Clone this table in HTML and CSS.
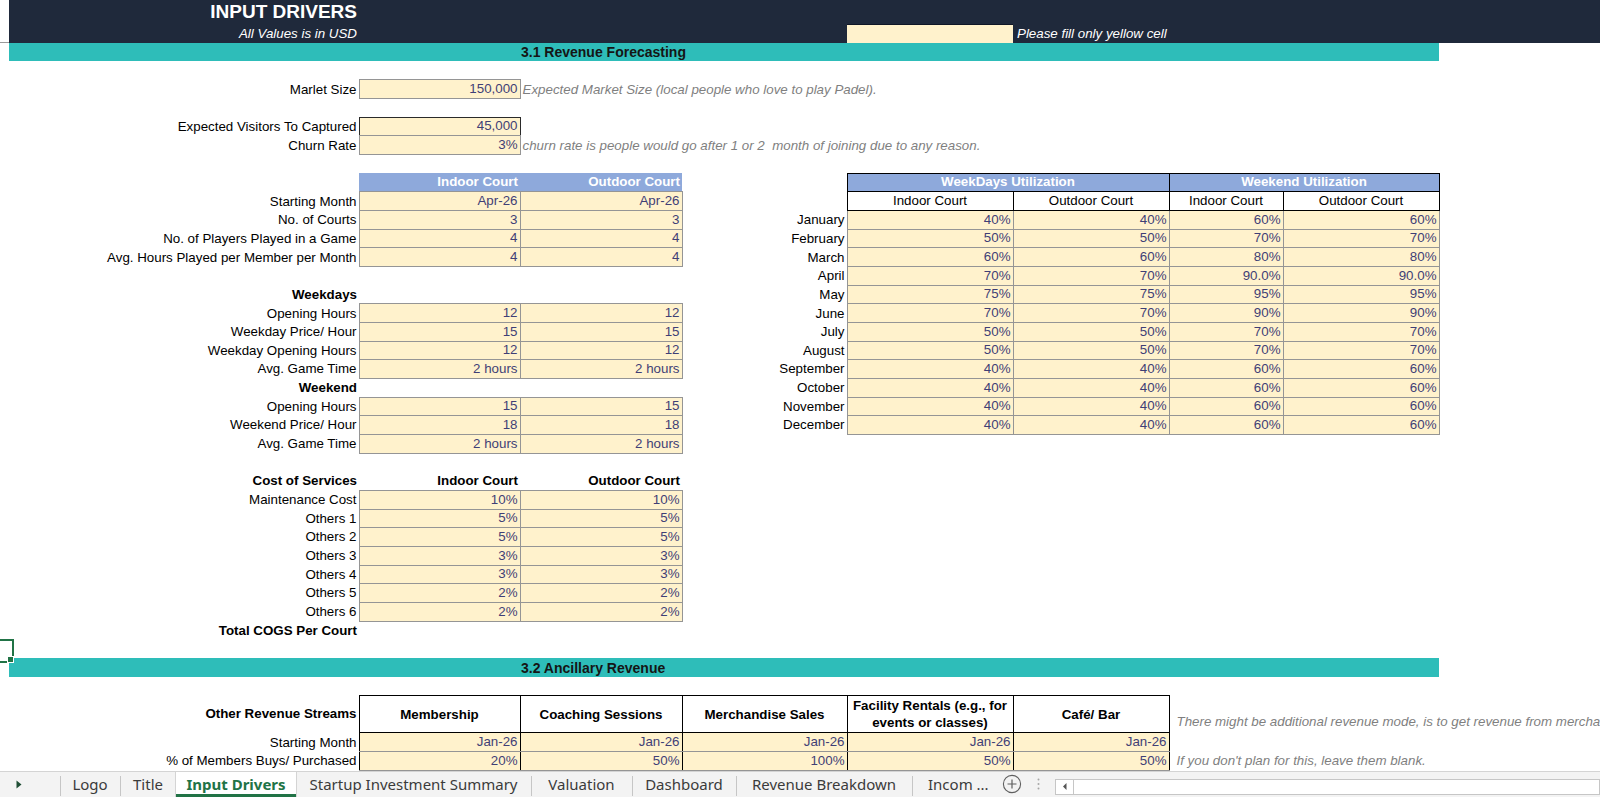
FILE: index.html
```html
<!DOCTYPE html>
<html lang="en">
<head>
<meta charset="utf-8">
<title>Input Drivers</title>
<link rel="stylesheet" href="styles.css">
</head>
<body>
<table class="sheet">
<colgroup>
<col class="ca"><col class="cb"><col class="cc"><col class="cd"><col class="ce"><col class="cf"><col class="cg"><col class="ch"><col class="ci"><col class="cj">
</colgroup>
<tbody>
<tr class="h0 navy"><td class="gut"></td><td class="title">INPUT DRIVERS</td><td colspan="8"></td></tr>
<tr class="navy"><td class="gut line"></td><td class="subt">All Values is in USD</td><td></td><td></td><td></td><td class="hy"></td><td class="hnote" colspan="4">Please fill only yellow cell</td></tr>
<tr><td></td><td class="tl"></td><td class="tl"></td><td class="tl sec" colspan="2">3.1 Revenue Forecasting</td><td class="tl"></td><td class="tl"></td><td class="tl"></td><td class="tl"></td><td></td></tr>
<tr><td colspan="10"></td></tr>
<tr><td></td><td class="lbl">Marlet Size</td><td class="in">150,000</td><td class="note" colspan="7">Expected Market Size (local people who love to play Padel).</td></tr>
<tr><td colspan="10"></td></tr>
<tr><td></td><td class="lbl">Expected Visitors To Captured</td><td class="in dk">45,000</td><td colspan="7"></td></tr>
<tr><td></td><td class="lbl">Churn Rate</td><td class="in">3%</td><td class="note" colspan="7">churn rate is people would go after 1 or 2&nbsp; month of joining due to any reason.</td></tr>
<tr><td colspan="10"></td></tr>
<tr><td></td><td></td><td class="blue">Indoor Court</td><td class="blue">Outdoor Court</td><td></td><td class="bhd" colspan="2">WeekDays Utilization</td><td class="bhd" colspan="2">Weekend Utilization</td><td></td></tr>
<tr><td></td><td class="lbl">Starting Month</td><td class="in">Apr-26</td><td class="in">Apr-26</td><td></td><td class="sub">Indoor Court</td><td class="sub">Outdoor Court</td><td class="sub">Indoor Court</td><td class="sub">Outdoor Court</td><td></td></tr>
<tr><td></td><td class="lbl">No. of Courts</td><td class="in">3</td><td class="in">3</td><td class="lbl">January</td><td class="in">40%</td><td class="in">40%</td><td class="in">60%</td><td class="in">60%</td><td></td></tr>
<tr><td></td><td class="lbl">No. of Players Played in a Game</td><td class="in">4</td><td class="in">4</td><td class="lbl">February</td><td class="in">50%</td><td class="in">50%</td><td class="in">70%</td><td class="in">70%</td><td></td></tr>
<tr><td></td><td class="lbl">Avg. Hours Played per Member per Month</td><td class="in">4</td><td class="in">4</td><td class="lbl">March</td><td class="in">60%</td><td class="in">60%</td><td class="in">80%</td><td class="in">80%</td><td></td></tr>
<tr><td></td><td></td><td></td><td></td><td class="lbl">April</td><td class="in">70%</td><td class="in">70%</td><td class="in">90.0%</td><td class="in">90.0%</td><td></td></tr>
<tr><td></td><td class="lbl b">Weekdays</td><td></td><td></td><td class="lbl">May</td><td class="in">75%</td><td class="in">75%</td><td class="in">95%</td><td class="in">95%</td><td></td></tr>
<tr><td></td><td class="lbl">Opening Hours</td><td class="in">12</td><td class="in">12</td><td class="lbl">June</td><td class="in">70%</td><td class="in">70%</td><td class="in">90%</td><td class="in">90%</td><td></td></tr>
<tr><td></td><td class="lbl">Weekday Price/ Hour</td><td class="in">15</td><td class="in">15</td><td class="lbl">July</td><td class="in">50%</td><td class="in">50%</td><td class="in">70%</td><td class="in">70%</td><td></td></tr>
<tr><td></td><td class="lbl">Weekday Opening Hours</td><td class="in">12</td><td class="in">12</td><td class="lbl">August</td><td class="in">50%</td><td class="in">50%</td><td class="in">70%</td><td class="in">70%</td><td></td></tr>
<tr><td></td><td class="lbl">Avg. Game Time</td><td class="in">2 hours</td><td class="in">2 hours</td><td class="lbl">September</td><td class="in">40%</td><td class="in">40%</td><td class="in">60%</td><td class="in">60%</td><td></td></tr>
<tr><td></td><td class="lbl b">Weekend</td><td></td><td></td><td class="lbl">October</td><td class="in">40%</td><td class="in">40%</td><td class="in">60%</td><td class="in">60%</td><td></td></tr>
<tr><td></td><td class="lbl">Opening Hours</td><td class="in">15</td><td class="in">15</td><td class="lbl">November</td><td class="in">40%</td><td class="in">40%</td><td class="in">60%</td><td class="in">60%</td><td></td></tr>
<tr><td></td><td class="lbl">Weekend Price/ Hour</td><td class="in">18</td><td class="in">18</td><td class="lbl">December</td><td class="in">40%</td><td class="in">40%</td><td class="in">60%</td><td class="in">60%</td><td></td></tr>
<tr><td></td><td class="lbl">Avg. Game Time</td><td class="in">2 hours</td><td class="in">2 hours</td><td colspan="6"></td></tr>
<tr><td colspan="10"></td></tr>
<tr><td></td><td class="lbl b">Cost of Services</td><td class="lbl b">Indoor Court</td><td class="lbl b">Outdoor Court</td><td colspan="6"></td></tr>
<tr><td></td><td class="lbl">Maintenance Cost</td><td class="in">10%</td><td class="in">10%</td><td colspan="6"></td></tr>
<tr><td></td><td class="lbl">Others 1</td><td class="in">5%</td><td class="in">5%</td><td colspan="6"></td></tr>
<tr><td></td><td class="lbl">Others 2</td><td class="in">5%</td><td class="in">5%</td><td colspan="6"></td></tr>
<tr><td></td><td class="lbl">Others 3</td><td class="in">3%</td><td class="in">3%</td><td colspan="6"></td></tr>
<tr><td></td><td class="lbl">Others 4</td><td class="in">3%</td><td class="in">3%</td><td colspan="6"></td></tr>
<tr><td></td><td class="lbl">Others 5</td><td class="in">2%</td><td class="in">2%</td><td colspan="6"></td></tr>
<tr><td></td><td class="lbl">Others 6</td><td class="in">2%</td><td class="in">2%</td><td colspan="6"></td></tr>
<tr><td></td><td class="lbl b">Total COGS Per Court</td><td colspan="8"></td></tr>
<tr><td class="sel"></td><td colspan="9"></td></tr>
<tr><td></td><td class="tl"></td><td class="tl"></td><td class="tl sec" colspan="2">3.2 Ancillary Revenue</td><td class="tl"></td><td class="tl"></td><td class="tl"></td><td class="tl"></td><td></td></tr>
<tr><td colspan="10"></td></tr>
<tr class="tall"><td></td><td class="lbl b mid">Other Revenue Streams</td><td class="oh">Membership</td><td class="oh">Coaching Sessions</td><td class="oh">Merchandise Sales</td><td class="oh wrap">Facility Rentals (e.g., for events or classes)</td><td class="oh">Café/ Bar</td><td class="note ind tallnote" colspan="3">There might be additional revenue mode, is to get revenue from merchandise, coaching sessions and events.</td></tr>
<tr><td></td><td class="lbl">Starting Month</td><td class="od">Jan-26</td><td class="od">Jan-26</td><td class="od">Jan-26</td><td class="od">Jan-26</td><td class="od">Jan-26</td><td colspan="3"></td></tr>
<tr><td></td><td class="lbl">% of Members Buys/ Purchased</td><td class="od">20%</td><td class="od">50%</td><td class="od">100%</td><td class="od">50%</td><td class="od">50%</td><td class="note ind" colspan="3">If you don't plan for this, leave them blank.</td></tr>
</tbody>
</table>

<div class="tabs">
  <div class="nav"><svg width="6" height="9" viewBox="0 0 6 9"><path d="M0.5 0.5 L5.5 4.5 L0.5 8.5 Z" fill="#1f4e35"/></svg></div>
  <div class="tab sep t-logo">Logo</div>
  <div class="tab sep t-title">Title</div>
  <div class="tab active t-input">Input Drivers</div>
  <div class="tab t-startup">Startup Investment Summary</div>
  <div class="tab sep t-val">Valuation</div>
  <div class="tab sep t-dash">Dashboard</div>
  <div class="tab sep t-rev">Revenue Breakdown</div>
  <div class="tab sep t-inc">Incom ...</div>
  <div class="add"><svg width="20" height="20" viewBox="0 0 20 20"><circle cx="10" cy="10" r="8.6" fill="none" stroke="#5f5f5f" stroke-width="1.1"/><path d="M10 5.5 V14.5 M5.5 10 H14.5" stroke="#5f5f5f" stroke-width="1.2"/></svg></div>
  <div class="dots"><svg width="3" height="12" viewBox="0 0 3 12"><circle cx="1.5" cy="1.5" r="1" fill="#a6a6a6"/><circle cx="1.5" cy="6" r="1" fill="#a6a6a6"/><circle cx="1.5" cy="10.5" r="1" fill="#a6a6a6"/></svg></div>
  <div class="hscroll"><div class="larr"><svg width="4" height="7" viewBox="0 0 4 7"><path d="M3.5 0 L0 3.5 L3.5 7 Z" fill="#555"/></svg></div></div>
</div>
</body>
</html>
```

FILE: styles.css
```css
* { box-sizing: border-box; }
html, body { margin: 0; padding: 0; }
body {
  width: 1600px;
  height: 797px;
  overflow: hidden;
  background: #fff;
  font-family: "Noto Sans", "Open Sans", sans-serif;
}

.sheet {
  border-collapse: collapse;
  table-layout: fixed;
  width: 1600px;
  font-family: "Liberation Sans", Arial, sans-serif;
  font-size: 13.33px;
  color: #000;
}
.ca { width: 9px; }
.cb { width: 350px; }
.cc { width: 161px; }
.cd { width: 162px; }
.ce { width: 165px; }
.cf { width: 166px; }
.cg { width: 156px; }
.ch { width: 114px; }
.ci { width: 156px; }
.cj { width: 161px; }

.sheet tr { height: 18.67px; }
.sheet tr.h0 { height: 24px; }
.sheet tr.tall { height: 37.33px; }

.sheet td {
  padding: 0 2px 1px 2px;
  line-height: 16px;
  white-space: nowrap;
  overflow: visible;
  vertical-align: bottom;
}

.navy td { background: #1f293b; }
.navy td.gut { background: #fff; }
.navy td.hy { background: #fff2cc; border-top: 1px solid #0f1626; }
.gut.line { border-bottom: 1px solid #9a9a9a; }

.sheet td.title {
  color: #fff;
  font-weight: bold;
  font-size: 19px;
  text-align: right;
  vertical-align: bottom;
  line-height: 20px;
  padding: 0 2px 2px 2px;
}
.subt { color: #fff; font-style: italic; text-align: right; }
.sheet td.hnote { color: #fff; font-style: italic; padding-left: 4px; }

.tl { background: #2ebdb9; }
.sheet td.sec {
  font-weight: bold;
  font-size: 14px;
  color: #151515;
  padding-left: 1px;
}

.lbl { text-align: right; }
.b { font-weight: bold; }
.sheet td.mid { vertical-align: middle; }

.in {
  background: #fff2cc;
  border: 1px solid #959595;
  color: #3f3f76;
  text-align: right;
}
.in.dk { border-color: #2a2a2a #2a2a2a #959595 #2a2a2a; }

.note {
  color: #7f7f7f;
  font-style: italic;
}
.sheet td.ind { padding-left: 7px; }
.sheet td.tallnote { padding-bottom: 3px; }

.blue {
  background: #8ea9db;
  color: #fff;
  font-weight: bold;
  text-align: right;
}
.bhd {
  background: #8ea9db;
  color: #fff;
  font-weight: bold;
  text-align: center;
  border: 1px solid #000;
}
.sub {
  background: #fff;
  text-align: center;
  border: 1px solid #000;
}

.sheet td.oh {
  background: #fff;
  border: 1px solid #000;
  font-weight: bold;
  text-align: center;
  vertical-align: middle;
  line-height: 17px;
  padding: 0 2px;
}
.sheet td.oh.wrap { white-space: normal; padding: 0 1px; }
.od {
  background: #fff2cc;
  color: #3f3f76;
  text-align: right;
  border-top: 1px solid #959595;
  border-bottom: 1px solid #959595;
  border-left: 1px solid #000;
  border-right: 1px solid #000;
}

.sel { position: relative; }
.sel::after {
  content: "";
  position: absolute;
  left: -4px;
  top: -1px;
  width: 14px;
  height: 20px;
  border: 2px solid #217346;
}
.sel::before {
  content: "";
  position: absolute;
  left: 7px;
  top: 16px;
  width: 5px;
  height: 5px;
  background: #217346;
  border: 1px solid #fff;
  z-index: 1;
}

/* sheet tabs */
.tabs {
  height: 26px;
  display: flex;
  align-items: stretch;
  background: #f3f3f3;
  border-top: 1px solid #d4d4d4;
  font-size: 15px;
  color: #3b3b3b;
}
.nav {
  width: 60px;
  display: flex;
  align-items: center;
  padding-left: 16px;
}
.tab {
  position: relative;
  display: flex;
  align-items: center;
  justify-content: center;
  white-space: nowrap;
}
.tab.sep::before {
  content: "";
  position: absolute;
  left: 0;
  top: 4px;
  bottom: 1px;
  width: 1px;
  background: #c6c6c6;
}
.t-logo { width: 60px; }
.t-title { width: 56px; }
.t-input { width: 120px; }
.t-startup { width: 235px; }
.t-val { width: 101px; }
.t-dash { width: 104px; }
.t-rev { width: 176px; }
.t-inc { width: 80px; justify-content: flex-start; padding-left: 16px; }
.tab.active {
  background: #fff;
  color: #217346;
  font-weight: bold;
  border-bottom: 3px solid #217346;
  padding-top: 2px;
  box-shadow: 1px 0 0 #d4d4d4, -1px 0 0 #d4d4d4;
}
.add {
  width: 40px;
  display: flex;
  align-items: center;
  padding-left: 10px;
}
.dots {
  width: 23px;
  display: flex;
  align-items: center;
  padding-left: 5px;
}
.hscroll {
  flex: 1;
  margin: 7px 0 2px 0;
  background: #fff;
  border: 1px solid #c6c6c6;
  display: flex;
}
.larr {
  width: 18px;
  border-right: 1px solid #c6c6c6;
  display: flex;
  align-items: center;
  justify-content: center;
}
```
